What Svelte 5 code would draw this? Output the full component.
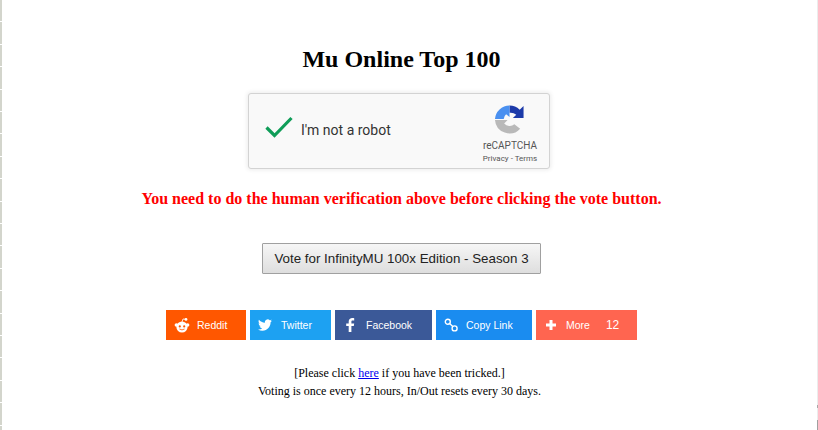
<script>
    const shares = [
        { label: "Reddit", cls: "reddit" },
        { label: "Twitter", cls: "twitter" },
        { label: "Facebook", cls: "facebook" },
        { label: "Copy Link", cls: "copy" },
    ];
</script>

<div class="page">
    <h1>Mu Online Top 100</h1>

    <div class="captcha">
        <svg class="check" viewBox="0 0 28 22" width="28" height="22">
            <path d="M1.5 11.5 L9.5 19.5 L26.5 2" fill="none" stroke="#0f9d58" stroke-width="3.2" />
        </svg>
        <span class="robot">I'm not a robot</span>
        <div class="brand">
            <svg class="logo" viewBox="0 0 32 32" width="31" height="32">
                <path d="M16 1 A15 15 0 0 1 26.5 5.3 L30.5 1.5 V14 H19.5 L23 10.5 A9 9 0 0 0 16 8.5 Z" fill="#1c3aa9" />
                <path d="M16 1 V13 L12.5 10 A7 7 0 0 0 10 15 H1 A15 15 0 0 1 16 1 Z" fill="#4a90f0" />
                <path d="M1 16 H14 L10.5 19.5 A7.5 7.5 0 0 0 21 20.5 L27 25 A15 15 0 0 1 1 16 Z" fill="#b9b9b9" />
            </svg>
            <div class="name">reCAPTCHA</div>
            <div class="terms">Privacy - Terms</div>
        </div>
    </div>

    <p class="warning">You need to do the human verification above before clicking the vote button.</p>

    <button class="vote">Vote for InfinityMU 100x Edition - Season 3</button>

    <div class="shares">
        {#each shares as s}
            <a class="share {s.cls}" href="#top">
                <span class="icon">
                    {#if s.cls === "reddit"}
                        <svg viewBox="0 0 16 16" width="16" height="16">
                            <circle cx="8" cy="10" r="5.6" fill="#fff" />
                            <circle cx="2.4" cy="8" r="1.8" fill="#fff" />
                            <circle cx="13.6" cy="8" r="1.8" fill="#fff" />
                            <circle cx="12" cy="2.4" r="1.4" fill="#fff" />
                            <path d="M8 5 L9 2 L12 2.4" fill="none" stroke="#fff" stroke-width="0.8" />
                            <circle cx="5.8" cy="9.4" r="1.1" fill="#ff5700" />
                            <circle cx="10.2" cy="9.4" r="1.1" fill="#ff5700" />
                            <path d="M5.4 12 Q8 13.8 10.6 12" fill="none" stroke="#ff5700" stroke-width="0.8" />
                        </svg>
                    {:else if s.cls === "twitter"}
                        <svg viewBox="0 0 24 24" width="14" height="14">
                            <path fill="#fff" d="M23.95 4.57a10 10 0 0 1-2.82.77 4.96 4.96 0 0 0 2.16-2.72c-.95.55-2 .96-3.12 1.18a4.92 4.92 0 0 0-8.38 4.48C7.69 8.1 4.07 6.13 1.64 3.16a4.82 4.82 0 0 0-.66 2.47c0 1.71.87 3.21 2.19 4.1a4.9 4.9 0 0 1-2.23-.62v.06a4.92 4.92 0 0 0 3.95 4.83 4.99 4.99 0 0 1-2.21.08 4.94 4.94 0 0 0 4.6 3.42A9.87 9.87 0 0 1 0 19.54a14 14 0 0 0 7.56 2.21c9.05 0 14-7.5 14-13.98 0-.21 0-.42-.02-.63a9.94 9.94 0 0 0 2.41-2.57z" />
                        </svg>
                    {:else if s.cls === "facebook"}
                        <svg viewBox="0 0 16 16" width="16" height="16">
                            <path fill="#fff" d="M8.4 15 V9 H10.8 L11.2 6.4 H8.4 V4.9 C8.4 4.1 8.7 3.6 9.8 3.6 H11.2 V1.2 C10.9 1.2 10.2 1.1 9.3 1.1 C7.3 1.1 5.7 2.3 5.7 4.5 V6.4 H3.2 V9 H5.7 V15 Z" />
                        </svg>
                    {:else if s.cls === "copy"}
                        <svg viewBox="0 0 16 16" width="16" height="16" fill="none" stroke="#fff" stroke-width="1.4">
                            <circle cx="3.8" cy="4.8" r="2.5" />
                            <circle cx="10.6" cy="11.4" r="2.5" />
                            <path d="M5.6 6.6 L8.8 9.6" />
                        </svg>
                    {/if}
                </span>
                {s.label}
            </a>
        {/each}
        <a class="share more" href="#top">
            <span class="icon">
                <svg viewBox="0 0 16 16" width="16" height="16">
                    <path fill="#fff" d="M5.5 3 H8.5 V6.5 H12 V9.5 H8.5 V13 H5.5 V9.5 H2 V6.5 H5.5 Z" />
                </svg>
            </span>
            More
            <span class="count">12</span>
        </a>
    </div>

    <p class="foot">
        [Please click <a href="#top">here</a> if you have been tricked.]<br />
        Voting is once every 12 hours, In/Out resets every 30 days.
    </p>
</div>

<style>
    :global(body) {
        background: #fff;
        overflow: hidden;
    }

    .page {
        height: 430px;
        box-sizing: border-box;
        display: flex;
        flex-direction: column;
        align-items: center;
        font-family: "Liberation Serif", "Times New Roman", serif;
        color: #000;
        padding: 45px 15px 0 0;
        /* clipped window edges left over in the capture */
        background:
            repeating-linear-gradient(#d3d5cc 0 21.4px, #fff 21.4px 22.4px) left top / 2px 100% no-repeat,
            linear-gradient(#ececec 0 405px, #a8a8a8 405px 408px, #ececec 408px 420px, #a0a0a0 420px) right top / 1px 100% no-repeat;
    }

    h1 {
        margin: 0;
        font-size: 24px;
        line-height: 28px;
        font-weight: bold;
    }

    .captcha {
        margin: 20px 5px 0 0;
        width: 302px;
        height: 76px;
        box-sizing: border-box;
        background: #f9f9f9;
        border: 1px solid #d3d3d3;
        border-radius: 3px;
        box-shadow: 0 0 4px 1px rgba(0, 0, 0, 0.08);
        display: flex;
        align-items: center;
        padding: 0 4px 0 16px;
        font-family: Roboto, "Liberation Sans", sans-serif;
    }

    .check {
        flex: none;
        margin-bottom: 9px;
    }

    .robot {
        margin: 0 0 2px 8px;
        font-size: 14px;
        color: #333;
    }

    .brand {
        margin-left: auto;
        width: 70px;
        display: flex;
        flex-direction: column;
        align-items: center;
        color: #555;
        padding-top: 6px;
    }

    .logo {
        margin-right: 2px;
    }

    .name {
        font-size: 10px;
        line-height: 12px;
        margin-top: 4px;
    }

    .terms {
        font-size: 8px;
        line-height: 12px;
        margin-top: 1px;
    }

    .warning {
        margin: 21px 0 0;
        font-size: 16px;
        line-height: 18px;
        font-weight: bold;
        color: #f00;
    }

    .vote {
        margin-top: 35px;
        width: 279px;
        height: 31px;
        padding: 0;
        font-family: "Liberation Sans", Arial, sans-serif;
        font-size: 13.33px;
        color: #222;
        border: 1px solid #a0a0a0;
        border-radius: 1px;
        background: linear-gradient(#f6f6f6, #dedede);
    }

    .shares {
        margin-top: 36px;
        display: flex;
        gap: 4px;
    }

    .share {
        height: 30px;
        display: flex;
        align-items: center;
        box-sizing: border-box;
        padding-left: 8px;
        color: #fff;
        text-decoration: none;
        font-family: "Liberation Sans", Arial, sans-serif;
        font-size: 10.5px;
    }

    .icon {
        display: flex;
        align-items: center;
        width: 16px;
        height: 16px;
        margin-right: 7px;
    }

    .copy .icon,
    .more .icon {
        margin-right: 6px;
    }

    .reddit {
        width: 80px;
        background: #ff5700;
    }

    .twitter {
        width: 81px;
        background: #1da1f2;
    }

    .facebook {
        width: 97px;
        background: #3b5998;
    }

    .copy {
        width: 96px;
        background: #1a8cf0;
    }

    .more {
        width: 101px;
        background: #ff6550;
    }

    .count {
        margin-left: 16px;
        font-size: 12px;
    }

    .foot {
        margin: 24px 4px 0 0;
        font-size: 12px;
        line-height: 18px;
        text-align: center;
    }

    .foot a {
        color: #00e;
    }
</style>
